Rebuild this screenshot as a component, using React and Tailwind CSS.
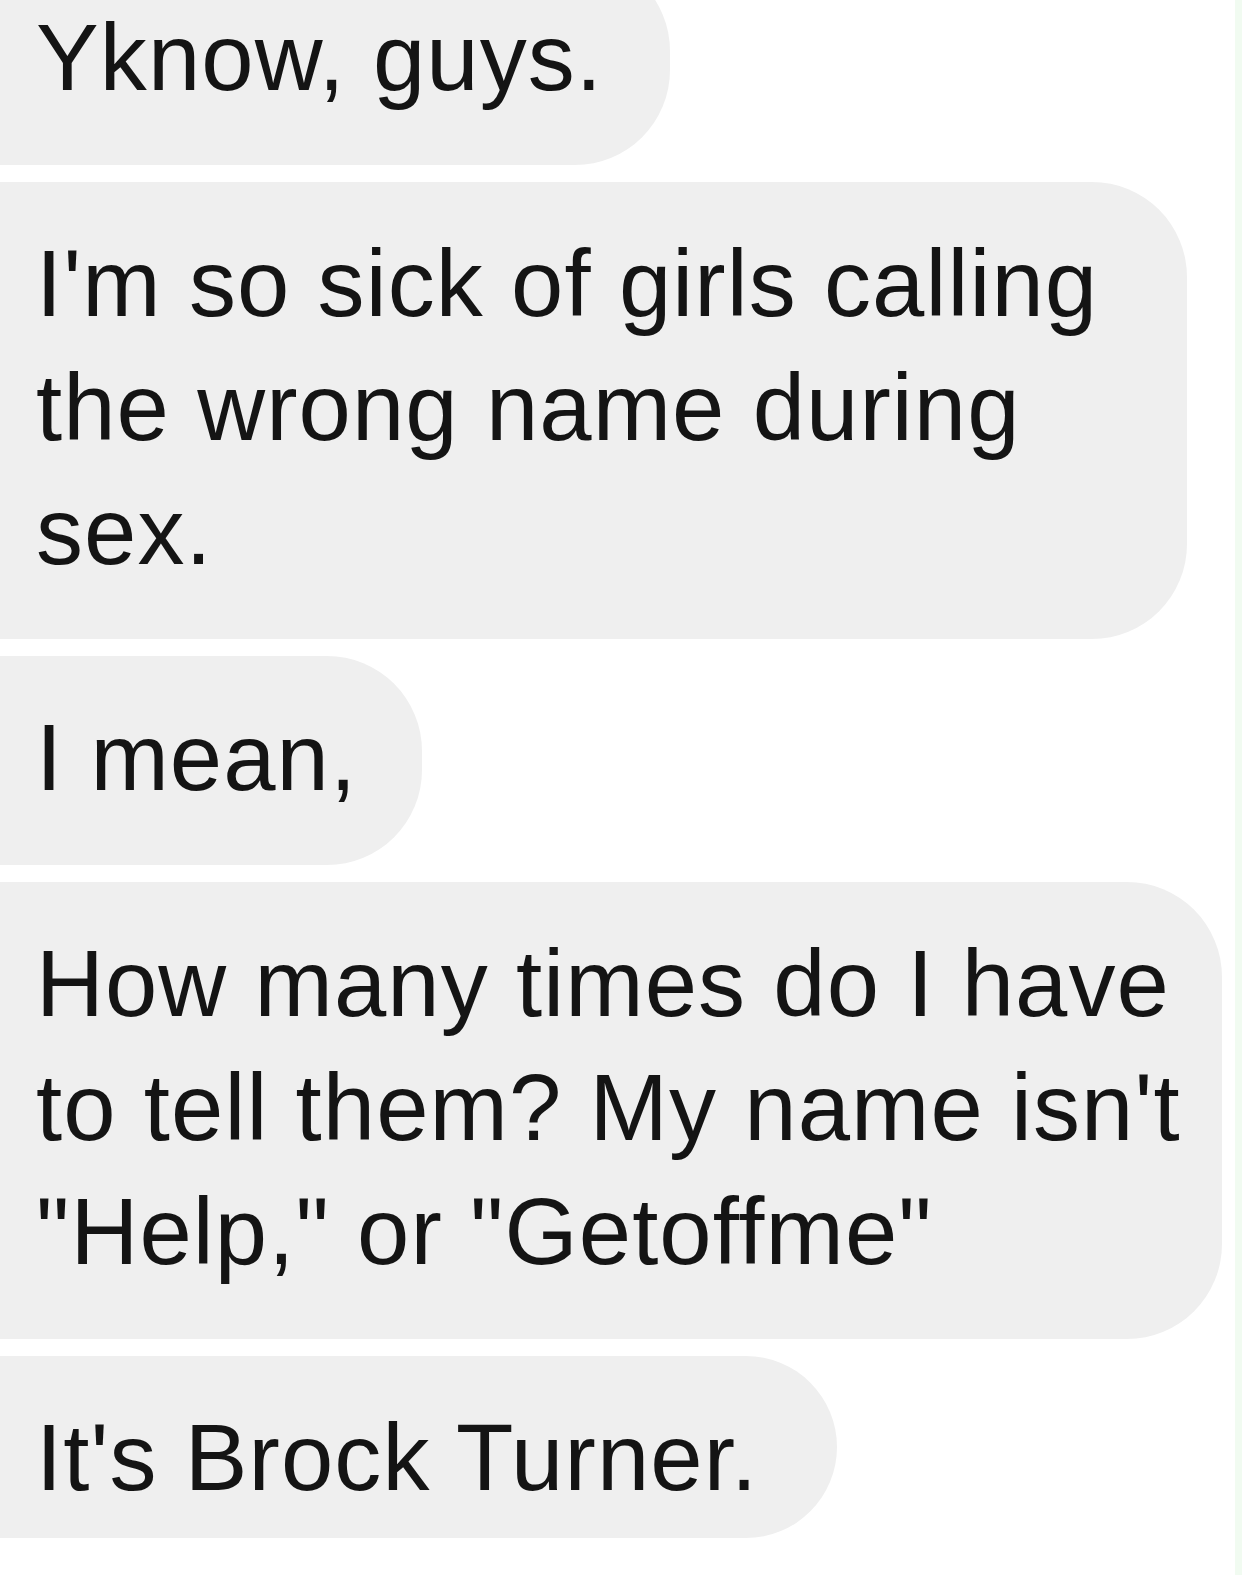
const messages = [
  { lines: ['Yknow, guys.'], width: 'w-[670px]', first: true },
  { lines: ["I'm so sick of girls calling", 'the wrong name during', 'sex.'], width: 'w-[1187px]' },
  { lines: ['I mean,'], width: 'w-[422px]' },
  {
    lines: ['How many times do I have', "to tell them? My name isn't", '"Help," or "Getoffme"'],
    width: 'w-[1222px]',
  },
  { lines: ["It's Brock Turner."], width: 'w-[837px]', last: true },
];

const Bubble = ({ lines, width, first, last }) => {
  return (
    <div
      className={`${width} ${first ? '-mt-[44px]' : ''} ${
        last ? 'h-[182px] pb-0' : 'pb-[45px]'
      } shrink-0 overflow-hidden rounded-r-[95px] bg-[#efefef] pl-[36px] pt-[40px]`}
    >
      {lines.map((line, i) => (
        <div
          key={i}
          className="whitespace-nowrap text-[94px] leading-[124px] tracking-[1.1px] text-[#141414]"
        >
          {line}
        </div>
      ))}
    </div>
  );
};

const App = () => {
  return (
    <div
      className="flex h-[1575px] w-[1242px] overflow-hidden bg-white"
      style={{ fontFamily: '"Liberation Sans", Arial, sans-serif' }}
    >
      <div className="flex flex-1 flex-col gap-[17px]">
        {messages.map((m, i) => (
          <Bubble key={i} {...m} />
        ))}
      </div>
      <div className="w-[7px] bg-[#f1fbf1]" />
    </div>
  );
};

export default App;
